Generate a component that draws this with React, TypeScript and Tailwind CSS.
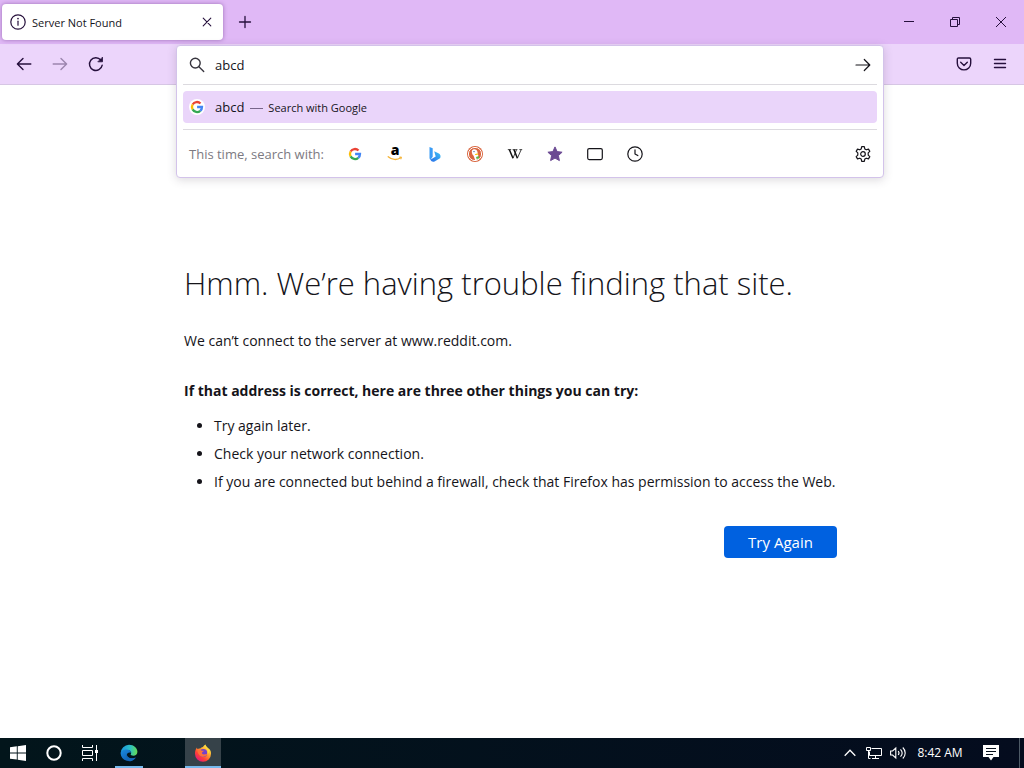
import type { ReactNode } from "react";

type IconProps = { className?: string };

function Stroke({ children, className = "size-4", width = 1.2 }: { children: ReactNode; className?: string; width?: number }) {
  return (
    <svg viewBox="0 0 16 16" className={className} fill="none" stroke="currentColor" strokeWidth={width} strokeLinecap="round" strokeLinejoin="round" aria-hidden="true">
      {children}
    </svg>
  );
}

function GoogleIcon({ className = "size-4" }: IconProps) {
  return (
    <svg viewBox="0 0 16 16" className={className} aria-hidden="true">
      <circle cx="8" cy="8" r="8" fill="#fff" />
      <g fill="none" strokeWidth="2.3">
        <path d="M3.6 5.5A5 5 0 0 1 11.5 4.5" stroke="#ea4335" />
        <path d="M3.6 10.4A5 5 0 0 1 3.6 5.5" stroke="#fbbc05" />
        <path d="M11.3 11.8A5 5 0 0 1 3.6 10.4" stroke="#34a853" />
        <path d="M8.1 8H13A5 5 0 0 1 11.3 11.8" stroke="#4285f4" />
      </g>
    </svg>
  );
}

function AmazonIcon() {
  return (
    <svg viewBox="0 0 16 16" className="size-4 overflow-visible" aria-hidden="true">
      <text x="8" y="8.500" textAnchor="middle" fontSize="14" fontWeight="800" fontFamily="Open Sans, sans-serif" fill="#000">a</text>
      <path d="M1.2 10.8C5 14.2 10.2 14.2 13.8 11.8" fill="none" stroke="#f5b335" strokeWidth="1.3" strokeLinecap="round" />
      <path d="M12.2 11.2l2.2-.2-.5 2.3" fill="none" stroke="#f5b335" strokeWidth="1" />
    </svg>
  );
}

function BingIcon() {
  return (
    <svg viewBox="0 0 16 16" className="size-4" aria-hidden="true">
      <defs>
        <linearGradient id="bing" x1="0" y1="1" x2="1" y2="0">
          <stop offset="0" stopColor="#2a6fe8" />
          <stop offset="1" stopColor="#3cc3f5" />
        </linearGradient>
      </defs>
      <path d="M2.500 1l3.200 1.200v8.600L3.400 14a3 3 0 0 1-.9-2z" fill="#3a9cf5" />
      <path d="M7.200 5.300l4.200 1.900a3.500 3.500 0 0 1 1.600 5L8 15.200a3.600 3.600 0 0 1-4.700-1.400l5.400-3.200z" fill="url(#bing)" />
    </svg>
  );
}

function DuckIcon() {
  return (
    <svg viewBox="0 0 16 16" className="size-4" aria-hidden="true">
      <circle cx="8" cy="8" r="8" fill="#d9653e" />
      <circle cx="8" cy="8" r="6.600" fill="none" stroke="#fff" strokeWidth="1" />
      <path d="M5 4.500c1.300-2 4.600-1.700 5.300.8l.7 3.200 1 4.400-3.800 1.400-1.600-4.600C5.200 8.600 4.400 6.200 5 4.500z" fill="#fff" />
      <circle cx="7" cy="5.600" r=".7" fill="#2d4f8e" />
      <path d="M8 8.200c1.200-.7 2.800-.8 3.500-.3-.4.800-1.700 1.100-3.400 1.200z" fill="#fdc20a" />
      <path d="M9 11l3-1v2.500l-2.400.5z" fill="#5bb947" />
    </svg>
  );
}

function WikipediaIcon() {
  return (
    <svg viewBox="0 0 16 16" className="size-4" fill="none" stroke="#111" aria-hidden="true">
      <path d="M2.400 3.800l3.600 8.400M7 3.800l3.400 8.400" strokeWidth="1.500" />
      <path d="M6 12.200L9.400 4M10.400 12.200L14 4" strokeWidth=".8" />
      <path d="M.8 3.600h3.400M5.600 3.600h2.800M8.400 3.600h2M12.400 3.600h2.800" strokeWidth=".8" />
    </svg>
  );
}

function GearIcon() {
  return (
    <Stroke>
      <path d="M6.700.7h2.600l.5 2.200 1.500.9 2.200-.7 1.300 2.300-1.600 1.500v2.200l1.600 1.500-1.300 2.300-2.200-.7-1.500.9-.5 2.200H6.700l-.5-2.200-1.500-.9-2.200.7-1.300-2.300 1.600-1.500V6.900L1.200 5.400l1.300-2.300 2.200.7 1.500-.9z" />
      <circle cx="8" cy="8" r="2.300" />
    </Stroke>
  );
}

function EdgeIcon() {
  return (
    <svg viewBox="0 0 18 18" className="size-[18px]" aria-hidden="true">
      <defs>
        <linearGradient id="edge-top" x1="0" y1="0.4" x2="1" y2="0.5">
          <stop offset="0" stopColor="#1b93df" />
          <stop offset=".55" stopColor="#2bc0c4" />
          <stop offset="1" stopColor="#66dc55" />
        </linearGradient>
        <linearGradient id="edge-low" x1="0" y1="0" x2="1" y2="1">
          <stop offset="0" stopColor="#1a8be0" />
          <stop offset="1" stopColor="#0d4ea5" />
        </linearGradient>
      </defs>
      <path d="M.7 9A8.400 8.400 0 0 1 9 .7c5 0 8.400 3.500 8.400 7 0 2.500-1.800 4-4 4-1.700 0-2.700-.6-2.700-1.200 0-.5.5-.7.5-1.700C11.200 7.100 9.500 6 7.300 6 3.500 6 .8 8.200.7 9z" fill="url(#edge-top)" />
      <path d="M.6 9.500C.8 7.200 3.600 5.600 6.600 5.600c2.600 0 4.600 1.300 4.600 3.200-2.600-1-4.700.6-4.300 2.600.5 2.600 4.500 3.800 8.800 2.300A8.400 8.400 0 0 1 .6 9.500z" fill="url(#edge-low)" />
      <path d="M6.900 9.500c-2 3 .2 6.600 3.400 7.700 2.300-.3 4.400-1.800 5.500-3.600-4.600 1.600-9.300.3-8.900-4.100z" fill="#1467b8" />
    </svg>
  );
}

function FirefoxIcon() {
  return (
    <svg viewBox="0 0 18 18" className="size-[18px]" aria-hidden="true">
      <defs>
        <linearGradient id="fox" x1=".85" y1=".1" x2=".2" y2=".95">
          <stop offset="0" stopColor="#fff14f" />
          <stop offset=".4" stopColor="#ff9a2b" />
          <stop offset=".7" stopColor="#ff4038" />
          <stop offset="1" stopColor="#e3177b" />
        </linearGradient>
      </defs>
      <path d="M11.500.5c.2 1.600 1.300 2.400 2.300 3.400C16.200 5.200 17.200 7.300 17 9.800a8 8 0 0 1-16 0C.9 7.200 1.700 5 3 3.500c0 .8.200 1.200.5 1.600.8-.6 1.900-.7 2.800-.5.7-1 1.500-1.500 2.600-1.700C9.600 2 10.500 1 11.500.5z" fill="url(#fox)" />
      <circle cx="9.300" cy="9" r="3.900" fill="#7542c9" />
      <path d="M3.500 6.200c1.600-.9 3.300-.4 4.300.6h2c-.1 1-1.200 1.100-1.800 1.700-.3.700.3 1.900 2 2 1.300 0 2.200-.8 3.200-.4-1 2.400-3.900 3.400-6.300 2.200C4.700 11.200 3.600 8.700 3.500 6.200z" fill="#ff7139" />
      <path d="M11.500.5c-.6 1.800.3 2.900 1.300 4.200 1.100 1.500 1.300 3.500.6 5.200 1.300-.7 1.700-1.900 1.800-3C14.900 4 12 3.100 11.500.5z" fill="#ffd93b" />
    </svg>
  );
}

const engines: { name: string; icon: ReactNode }[] = [
  { name: "Google", icon: <GoogleIcon /> },
  { name: "Amazon", icon: <AmazonIcon /> },
  { name: "Bing", icon: <BingIcon /> },
  { name: "DuckDuckGo", icon: <DuckIcon /> },
  { name: "Wikipedia", icon: <WikipediaIcon /> },
  {
    name: "Bookmarks",
    icon: (
      <svg viewBox="0 0 16 16" className="size-4" fill="#6b4a93" stroke="#6b4a93" strokeLinejoin="round" aria-hidden="true">
        <path d="M8 .9l2.100 4.700 5 .6-3.700 3.400 1 5L8 12.100l-4.400 2.500 1-5L.9 6.200l5-.6z" />
      </svg>
    ),
  },
  { name: "Tabs", icon: <Stroke><rect x=".7" y="2.600" width="14.600" height="11" rx="1.500" /></Stroke> },
  { name: "History", icon: <Stroke><circle cx="8" cy="8" r="7.200" /><path d="M8 3.800V8l2.800 1.600" /></Stroke> },
];

const tips = [
  "Try again later.",
  "Check your network connection.",
  "If you are connected but behind a firewall, check that Firefox has permission to access the Web.",
];

const toolButton = "flex h-9 w-9 items-center justify-center";
const taskButton = "flex h-full w-9 items-center justify-center";

function TitleBar() {
  return (
    <div className="flex h-11 items-center bg-[#e0b8f6] text-[#26103c]">
      <div className="ml-[2px] flex h-9 w-[221px] items-center rounded bg-white px-2 shadow-[0_0_4px_rgba(90,40,120,0.5)]">
        <Stroke>
          <circle cx="8" cy="8" r="7.200" />
          <path d="M8 7.200v4" />
          <path d="M8 4.500v.1" strokeWidth="1.700" />
        </Stroke>
        <span className="ml-[6px] flex-1 pt-[2px] text-[11px] text-[#15141a]">Server Not Found</span>
        <button aria-label="Close tab" className="flex size-4 items-center justify-center">
          <Stroke width={1.100}><path d="M4.200 4.200l7.600 7.600M11.800 4.200l-7.600 7.600" /></Stroke>
        </button>
      </div>
      <button aria-label="New tab" className="ml-1 flex h-9 w-9 items-center justify-center">
        <Stroke width={1.300}><path d="M8 2.500v11M2.500 8h11" /></Stroke>
      </button>
      <div className="ml-auto flex h-full">
        <button aria-label="Minimize" className="flex w-[46px] items-center justify-center">
          <svg viewBox="0 0 10 10" className="size-[10px]" stroke="currentColor" aria-hidden="true"><path d="M0 4.500h10" /></svg>
        </button>
        <button aria-label="Restore" className="flex w-[46px] items-center justify-center">
          <svg viewBox="0 0 10 10" className="size-[10px]" fill="none" stroke="currentColor" aria-hidden="true"><path d="M.5 2.500h7v7h-7zM2.500 2.500v-2h7v7h-2" /></svg>
        </button>
        <button aria-label="Close" className="flex w-[46px] items-center justify-center">
          <svg viewBox="0 0 10 10" className="size-[10px]" stroke="currentColor" aria-hidden="true"><path d="M0 0l10 10M10 0L0 10" /></svg>
        </button>
      </div>
    </div>
  );
}

function AddressPanel() {
  return (
    <div className="absolute inset-x-0 top-px z-10 rounded border border-[#d3c3ea] bg-white px-[6px] text-[#15141a] shadow-[0_2px_10px_rgba(60,50,70,0.18)]">
      <div className="flex h-[39px] items-center border-b border-[#dcdadf] px-[6px]">
        <Stroke className="size-4 text-[#38363f]" width={1.400}>
          <circle cx="6.300" cy="6.100" r="4.900" />
          <path d="M9.900 9.800l4.800 4.600" />
        </Stroke>
        <input aria-label="Search or enter address" defaultValue="abcd" className="ml-[10px] min-w-0 flex-1 bg-transparent pt-[2px] text-[13px] outline-none" />
        <button aria-label="Go">
          <Stroke><path d="M1 8h13.700M9.300 2.500L14.800 8l-5.500 5.500" /></Stroke>
        </button>
      </div>
      <button className="mt-[6px] flex h-8 w-full items-center rounded bg-[#ead5fa] px-[6px] text-left">
        <GoogleIcon />
        <span className="ml-[10px] pt-[2px] text-[13px]">abcd</span>
        <span className="ml-[6px] mt-[2px] h-px w-[13px] bg-[#77658a]" />
        <span className="ml-[5px] pt-[2px] text-[11px]">Search with Google</span>
      </button>
      <div className="mt-[6px] flex h-12 items-center border-t border-[#dcdadf] px-[6px]">
        <span className="w-[158px] pt-[2px] text-[13px] text-[#7c7a82]">This time, search with:</span>
        <div className="flex gap-6">
          {engines.map((engine) => (
            <button key={engine.name} aria-label={engine.name}>{engine.icon}</button>
          ))}
        </div>
        <button aria-label="Search settings" className="ml-auto"><GearIcon /></button>
      </div>
    </div>
  );
}

function Toolbar() {
  return (
    <div className="flex h-[41px] border-b border-[#d6c6e4] bg-[#ecd5fb] text-[#26103c]">
      <div className="flex w-[176px] items-center pl-[6px]">
        <button aria-label="Back" className={toolButton}>
          <Stroke width={1.400}><path d="M14.800 8H1.500M7 2.500L1.400 8 7 13.500" /></Stroke>
        </button>
        <button aria-label="Forward" disabled className={toolButton + " opacity-40"}>
          <Stroke width={1.400}><path d="M1.200 8h13.300M9 2.500L14.600 8 9 13.500" /></Stroke>
        </button>
        <button aria-label="Reload" className={toolButton}>
          <Stroke width={1.400}>
            <path d="M14.200 9.200A6.400 6.400 0 1 1 12.800 4" />
            <path d="M14.500 1.500v4.300h-4.300z" fill="currentColor" strokeWidth=".8" />
          </Stroke>
        </button>
      </div>
      <div className="relative min-w-0 flex-1"><AddressPanel /></div>
      <div className="flex w-[140px] items-center justify-end pr-[6px]">
        <button aria-label="Save to Pocket" className={toolButton}>
          <Stroke width={1.400}>
            <path d="M2.600 2h10.800c.8 0 1.300.5 1.300 1.300v3.900a6.700 6.700 0 0 1-13.400 0V3.300C1.300 2.500 1.800 2 2.600 2z" />
            <path d="M4.700 6.300L8 9.400l3.300-3.100" />
          </Stroke>
        </button>
        <button aria-label="Menu" className={toolButton}>
          <Stroke width={1.400}><path d="M2.500 3.500h11M2.500 7.500h11M2.500 11.500h11" /></Stroke>
        </button>
      </div>
    </div>
  );
}

function Taskbar() {
  return (
    <footer className="flex h-[30px] shrink-0 items-stretch bg-gradient-to-r from-[#02151b] to-[#040c1e] text-white">
      <button aria-label="Start" className={taskButton}>
        <svg viewBox="0 0 16 16" className="size-4" fill="#fff" aria-hidden="true">
          <path d="M0 2.300L6.800 1.300v6.200H0zM7.700 1.200L16 0v7.500H7.700zM0 8.400h6.800v6.200L0 13.700zM7.700 8.400H16V16l-8.300-1.200z" />
        </svg>
      </button>
      <button aria-label="Cortana" className={taskButton}>
        <svg viewBox="0 0 16 16" className="size-4" aria-hidden="true"><circle cx="8" cy="8" r="6.700" fill="none" stroke="#fff" strokeWidth="2" /></svg>
      </button>
      <button aria-label="Task view" className={taskButton}>
        <svg viewBox="0 0 18 16" className="h-4 w-[18px]" fill="none" stroke="#fff" aria-hidden="true">
          <path d="M1.500 0v2.500h10V0M1.500 16v-2.500h10V16M1.500 5.500h10v5h-10zM15.500 0v16" />
          <path d="M14 5h3v3h-3z" fill="#fff" stroke="none" />
        </svg>
      </button>
      <button aria-label="Microsoft Edge" className="relative ml-[3px] flex w-9 items-center justify-center">
        <EdgeIcon />
        <span className="absolute inset-x-1 bottom-0 h-[2px] bg-[#76b9ed]" />
      </button>
      <button aria-label="Firefox" className="relative ml-[38px] flex w-9 items-center justify-center bg-[#364249]">
        <FirefoxIcon />
        <span className="absolute inset-x-0 bottom-0 h-[2px] bg-[#76b9ed]" />
      </button>
      <div className="ml-auto flex items-center">
        <button aria-label="Show hidden icons" className="flex w-6 justify-center">
          <svg viewBox="0 0 12 8" className="h-2 w-3" fill="none" stroke="#fff" strokeWidth="1.300" aria-hidden="true"><path d="M.7 6.700L6 1.300l5.300 5.400" /></svg>
        </button>
        <button aria-label="Network" className="flex w-6 justify-center">
          <svg viewBox="0 0 16 14" className="h-[14px] w-4" fill="none" stroke="#fff" aria-hidden="true">
            <path d="M5.500 2.500h10v7h-12v-4M9.500 9.500v3M6 12.500h7M.5 1.500h4v3h-4zM2.500 4.500v8h2" />
          </svg>
        </button>
        <button aria-label="Volume" className="flex w-6 justify-center">
          <svg viewBox="0 0 17 14" className="h-[14px] w-[17px]" fill="none" stroke="#fff" strokeWidth="1.100" aria-hidden="true">
            <path d="M.6 5v4h2l3.200 3V2L2.600 5zM8.200 5c1 1.200 1 2.800 0 4M10.500 3.300c2 2.200 2 5.200 0 7.400M12.800 1.500c3.200 3.200 3.200 7.800 0 11" />
          </svg>
        </button>
        <time className="w-[60px] text-center text-xs">8:42 AM</time>
        <button aria-label="Notifications" className="ml-[3px] flex w-9 justify-center">
          <svg viewBox="0 0 16 16" className="size-4" aria-hidden="true">
            <path d="M0 0h16v12h-5.500L8 15.500 5.500 12H0z" fill="#fff" />
            <path d="M3 3.500h10M3 6.500h10M3 9.500h7" stroke="#06101c" />
          </svg>
        </button>
        <span className="ml-[10px] mr-1 h-[30px] w-px bg-[#4d5a66]" />
      </div>
    </footer>
  );
}

export default function App() {
  return (
    <div className="flex min-h-screen flex-col bg-white font-['Open_Sans','Noto_Sans',sans-serif] text-[#15141a]">
      <header>
        <TitleBar />
        <Toolbar />
      </header>
      <main className="mx-auto w-full max-w-[656px] flex-1 pt-[174px]">
        <h1 className="text-[31px] leading-[48px] font-light">Hmm. We’re having trouble finding that site.</h1>
        <p className="mt-[22px] text-sm leading-6">We can’t connect to the server at www.reddit.com.</p>
        <p className="mt-[26px] text-sm leading-6 font-bold">If that address is correct, here are three other things you can try:</p>
        <ul className="mt-[9px] list-disc pl-[30px] text-sm leading-7">
          {tips.map((tip) => <li key={tip}>{tip}</li>)}
        </ul>
        <div className="mr-[3px] mt-[30px] flex justify-end">
          <button className="h-8 w-[113px] rounded bg-[#0061e0] text-[15px] text-white">Try Again</button>
        </div>
      </main>
      <Taskbar />
    </div>
  );
}
